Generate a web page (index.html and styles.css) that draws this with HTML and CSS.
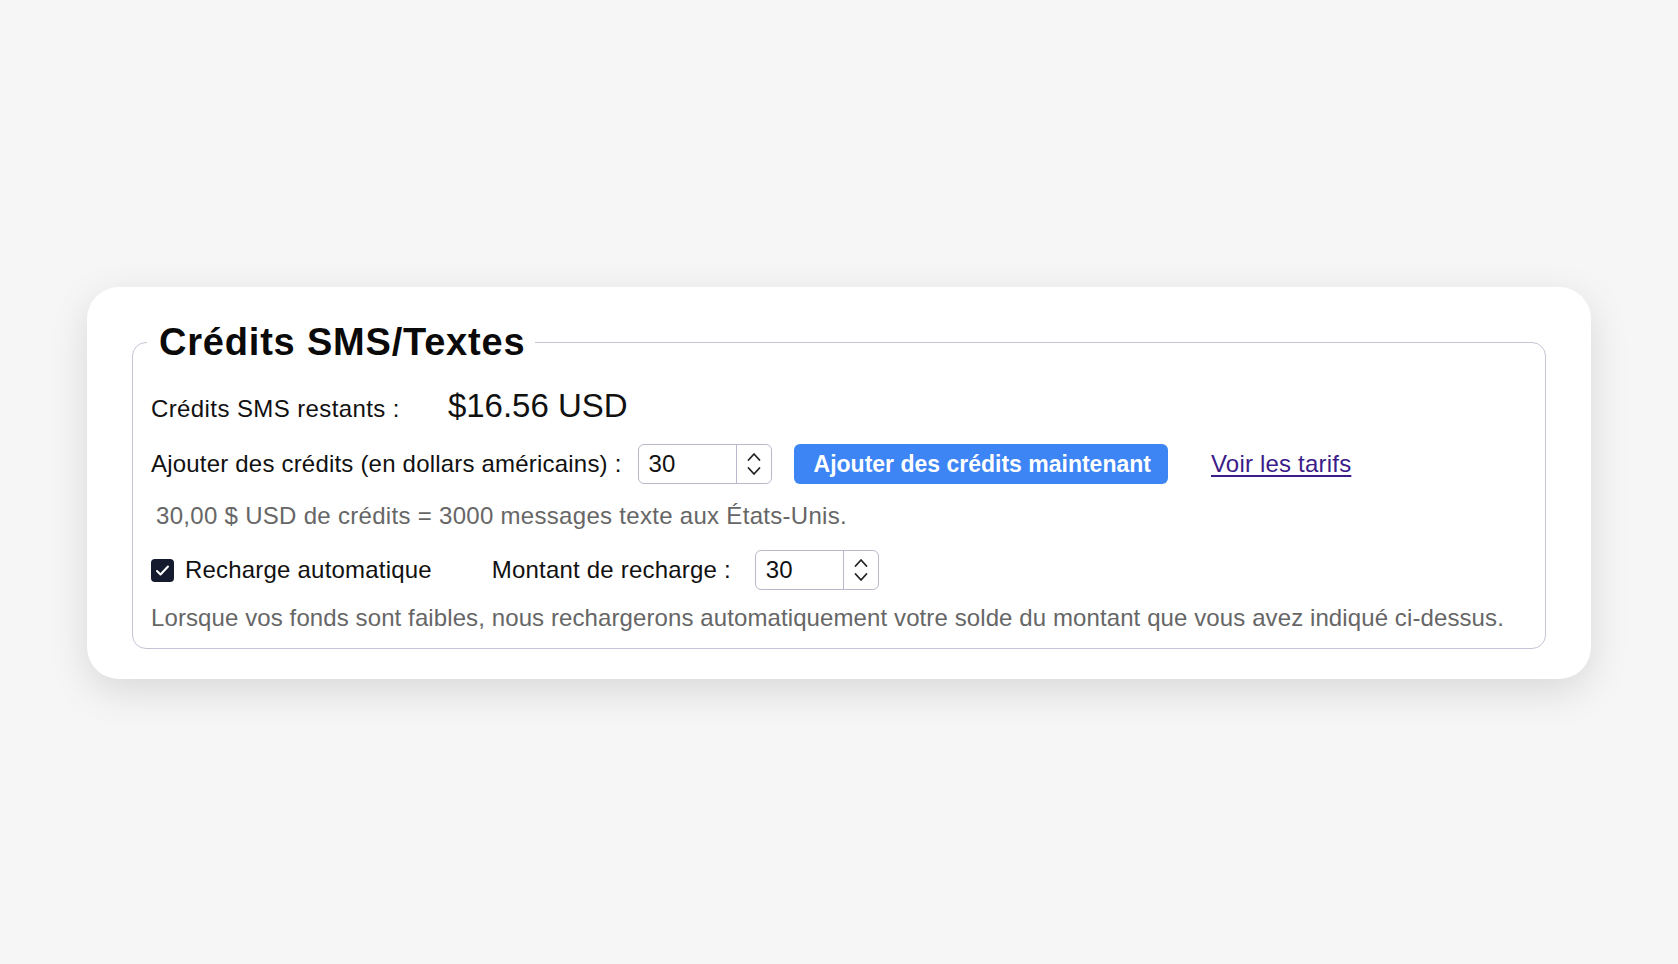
FILE: index.html
```html
<!DOCTYPE html>
<html lang="fr">
<head>
    <meta charset="UTF-8">
    <meta name="viewport" content="width=device-width, initial-scale=1.0">
    <title>Crédits SMS/Textes</title>
    <link rel="stylesheet" href="styles.css">
</head>
<body>
    <div class="card">
        <fieldset class="sms-box">
            <legend>Crédits SMS/Textes</legend>

            <div class="row balance-row">
                <span class="balance-label">Crédits SMS restants :</span>
                <span class="balance">$16.56 USD</span>
            </div>

            <div class="row add-row">
                <label for="addAmount" class="add-label">Ajouter des crédits (en dollars américains) :</label>
                <div class="num-input">
                    <input type="number" id="addAmount" value="30">
                    <span class="spin">
                        <svg width="14" height="32" viewBox="0 0 14 32" fill="none" stroke="#222" stroke-width="1.8" stroke-linecap="round" stroke-linejoin="round">
                            <path d="M1.5 12 7 6 12.5 12"/>
                            <path d="M1.5 20 7 26 12.5 20"/>
                        </svg>
                    </span>
                </div>
                <button type="button" class="add-btn">Ajouter des crédits maintenant</button>
                <a href="#" class="rates-link">Voir les tarifs</a>
            </div>

            <p class="hint hint-rate">30,00 $ USD de crédits = 3000 messages texte aux États-Unis.</p>

            <div class="row recharge-row">
                <label class="check-label">
                    <input type="checkbox" class="check-input" checked>
                    <span class="check-box">
                        <svg width="17" height="17" viewBox="0 0 17 17" fill="none" stroke="#fff" stroke-width="2" stroke-linecap="round" stroke-linejoin="round">
                            <path d="M3 9 6.5 12.5 14 4.5"/>
                        </svg>
                    </span>
                    Recharge automatique
                </label>
                <label for="rechargeAmount" class="recharge-label">Montant de recharge :</label>
                <div class="num-input num-small">
                    <input type="number" id="rechargeAmount" value="30">
                    <span class="spin">
                        <svg width="14" height="32" viewBox="0 0 14 32" fill="none" stroke="#222" stroke-width="1.8" stroke-linecap="round" stroke-linejoin="round">
                            <path d="M1.5 12 7 6 12.5 12"/>
                            <path d="M1.5 20 7 26 12.5 20"/>
                        </svg>
                    </span>
                </div>
            </div>

            <p class="hint">Lorsque vos fonds sont faibles, nous rechargerons automatiquement votre solde du montant que vous avez indiqué ci-dessus.</p>
        </fieldset>
    </div>
</body>
</html>
```

FILE: styles.css
```css
body {
    margin: 0;
    min-height: 100vh;
    box-sizing: border-box;
    padding-top: 2px;
    display: flex;
    align-items: center;
    justify-content: center;
    background: #f6f6f6;
    font-family: "Liberation Sans", Arial, sans-serif;
    font-size: 24px;
    line-height: 28px;
    letter-spacing: 0.2px;
    color: #111;
}
.card {
    width: 1504px;
    box-sizing: border-box;
    background: #fff;
    border-radius: 32px;
    padding: 34px 45px 30px;
    box-shadow: 0 12px 40px rgba(0,0,0,0.12);
}
.sms-box {
    margin: 0;
    min-width: 0;
    border: 1.5px solid #c4c4d6;
    border-radius: 14px;
    padding: 23px 18px 16px;
}
.sms-box legend {
    font-size: 38px;
    line-height: 43px;
    font-weight: bold;
    letter-spacing: 0.8px;
    color: #0a0a0a;
    padding: 0 10px 0 12px;
    margin-left: -4px;
}
.row {
    display: flex;
    align-items: center;
}
.balance-row {
    align-items: baseline;
    gap: 48px;
}
.balance-label {
    letter-spacing: 0.4px;
}
.balance {
    font-size: 33px;
    line-height: 38px;
    letter-spacing: 0;
}
.add-row {
    margin-top: 19px;
}
.add-label {
    margin-right: 16px;
}
.num-input {
    display: flex;
    width: 134px;
    height: 40px;
    box-sizing: border-box;
    border: 1.5px solid #b9b9cc;
    border-radius: 6px;
    background: #fff;
}
.num-input input {
    flex: 1;
    min-width: 0;
    border: none;
    outline: none;
    background: none;
    padding: 0 0 0 10px;
    font: inherit;
    color: #111;
    -moz-appearance: textfield;
}
.num-input input::-webkit-inner-spin-button,
.num-input input::-webkit-outer-spin-button {
    -webkit-appearance: none;
    margin: 0;
}
.spin {
    width: 34px;
    border-left: 1.5px solid #b9b9cc;
    display: flex;
    align-items: center;
    justify-content: center;
}
.num-small {
    width: 124px;
}
.add-btn {
    margin-left: 22px;
    height: 40px;
    padding: 0 17px 0 20px;
    border: none;
    border-radius: 6px;
    background: #3d84f5;
    color: #fff;
    font-family: inherit;
    font-size: 23px;
    font-weight: bold;
    letter-spacing: 0;
    cursor: pointer;
}
.rates-link {
    margin-left: 43px;
    color: #3b1c88;
    text-decoration: underline;
    text-underline-offset: 3px;
}
.hint {
    margin: 14px 0 0;
    color: #666;
    letter-spacing: 0.1px;
}
.hint-rate {
    margin: 18px 0 0 5px;
    letter-spacing: 0.3px;
}
.recharge-row {
    margin-top: 20px;
}
.check-label {
    display: flex;
    align-items: center;
    margin-right: 60px;
}
.recharge-label {
    margin-right: 24px;
}
.check-input {
    display: none;
}
.check-box {
    width: 23px;
    height: 23px;
    margin-right: 11px;
    border-radius: 4px;
    background: #151b2e;
    display: flex;
    align-items: center;
    justify-content: center;
}
```
